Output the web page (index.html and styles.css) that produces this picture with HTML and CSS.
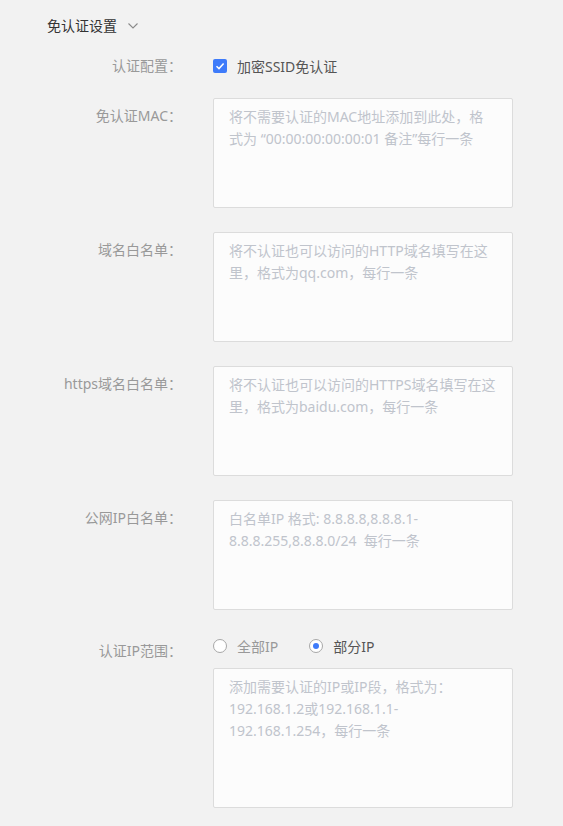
FILE: index.html
```html
<!DOCTYPE html>
<html lang="zh-CN">
<head>
    <meta charset="UTF-8">
    <meta name="viewport" content="width=device-width, initial-scale=1.0">
    <title>免认证设置</title>
    <link rel="stylesheet" href="styles.css">
</head>
<body>

    <div class="panel">
        <!-- Section Title -->
        <div class="section-title">
            <span>免认证设置</span>
            <svg class="chevron" width="10" height="6" viewBox="0 0 10 6">
                <path d="M0.5 0.5 L5 5 L9.5 0.5" fill="none" stroke="#8a8a8a" stroke-width="1.1"/>
            </svg>
        </div>

        <!-- Auth config -->
        <div class="form-item item-check">
            <label class="form-label">认证配置：</label>
            <div class="form-control">
                <span class="checkbox checked">
                    <svg width="14" height="14" viewBox="0 0 14 14">
                        <path d="M3.5 7.2 L6 9.6 L10.6 4.6" fill="none" stroke="#fff" stroke-width="1.5"/>
                    </svg>
                </span>
                <span class="check-text">加密SSID免认证</span>
            </div>
        </div>

        <div class="form-item">
            <label class="form-label">免认证MAC：</label>
            <div class="form-control">
                <textarea class="textarea" placeholder="将不需要认证的MAC地址添加到此处，格式为 “00:00:00:00:00:01 备注”每行一条"></textarea>
            </div>
        </div>

        <div class="form-item">
            <label class="form-label">域名白名单：</label>
            <div class="form-control">
                <textarea class="textarea" placeholder="将不认证也可以访问的HTTP域名填写在这里，格式为qq.com，每行一条"></textarea>
            </div>
        </div>

        <div class="form-item">
            <label class="form-label">https域名白名单：</label>
            <div class="form-control">
                <textarea class="textarea" placeholder="将不认证也可以访问的HTTPS域名填写在这里，格式为baidu.com，每行一条"></textarea>
            </div>
        </div>

        <div class="form-item">
            <label class="form-label">公网IP白名单：</label>
            <div class="form-control">
                <textarea class="textarea" placeholder="白名单IP 格式: 8.8.8.8,8.8.8.1-8.8.8.255,8.8.8.0/24  每行一条"></textarea>
            </div>
        </div>

        <!-- IP range -->
        <div class="form-item item-radio">
            <label class="form-label">认证IP范围：</label>
            <div class="form-control">
                <div class="radio-group">
                    <span class="radio"></span>
                    <span class="radio-text">全部IP</span>
                    <span class="radio checked"></span>
                    <span class="radio-text active">部分IP</span>
                </div>
                <textarea class="textarea tall" placeholder="添加需要认证的IP或IP段，格式为：192.168.1.2或192.168.1.1-192.168.1.254，每行一条"></textarea>
            </div>
        </div>
    </div>

</body>
</html>
```

FILE: styles.css
```css
/* Reset */
* {
    margin: 0;
    padding: 0;
    box-sizing: border-box;
}

body {
    font-family: "Noto Sans", "Noto Sans CJK SC", sans-serif;
    font-size: 14px;
    background-color: #f2f2f2;
    color: #333;
}

.panel {
    padding: 16px 0 0 47px;
}

/* Title */
.section-title {
    display: flex;
    align-items: center;
    height: 20px;
    line-height: 20px;
    color: #333;
    margin-bottom: 19px;
}

.chevron {
    margin-left: 11px;
}

/* Form rows */
.form-item {
    display: flex;
    margin-bottom: 24px;
}

.form-label {
    width: 135px;
    flex-shrink: 0;
    text-align: right;
    color: #999;
    line-height: 22px;
    padding-top: 7px;
    margin-right: 31px;
    white-space: nowrap;
}

.form-control {
    display: flex;
    flex-direction: column;
}

/* Checkbox row */
.item-check {
    margin-bottom: 21px;
}

.item-check .form-label {
    padding-top: 0;
}

.item-check .form-control {
    flex-direction: row;
    align-items: center;
    height: 22px;
}

.checkbox {
    width: 14px;
    height: 14px;
    border-radius: 2px;
    border: 1px solid #c0c4cc;
    background: #fff;
    display: inline-flex;
}

.checkbox.checked {
    background: #3e7bfa;
    border: none;
}

.check-text {
    margin-left: 10px;
    color: #555;
}

/* Textarea */
.textarea {
    width: 300px;
    height: 110px;
    padding: 7px 15px;
    border: 1px solid #dcdcdc;
    border-radius: 2px;
    background: #fcfcfc;
    font-family: inherit;
    font-size: 14px;
    line-height: 22px;
    color: #333;
    resize: none;
    outline: none;
}

.textarea::placeholder {
    color: #c0c4cc;
}

.textarea.tall {
    height: 140px;
}

/* Radio row */
.item-radio {
    margin-top: 26px;
}

.item-radio .form-label {
    padding-top: 4px;
}

.radio-group {
    display: flex;
    align-items: center;
    height: 20px;
    margin-bottom: 12px;
}

.radio {
    width: 14px;
    height: 14px;
    border: 1px solid #a8a8a8;
    border-radius: 50%;
    background: #fff;
    position: relative;
}

.radio.checked::after {
    content: "";
    position: absolute;
    left: 3px;
    top: 3px;
    width: 6px;
    height: 6px;
    border-radius: 50%;
    background: #3e7bfa;
}

.radio-text {
    margin-left: 10px;
    margin-right: 31px;
    color: #999;
}

.radio-text.active {
    color: #555;
}
```
